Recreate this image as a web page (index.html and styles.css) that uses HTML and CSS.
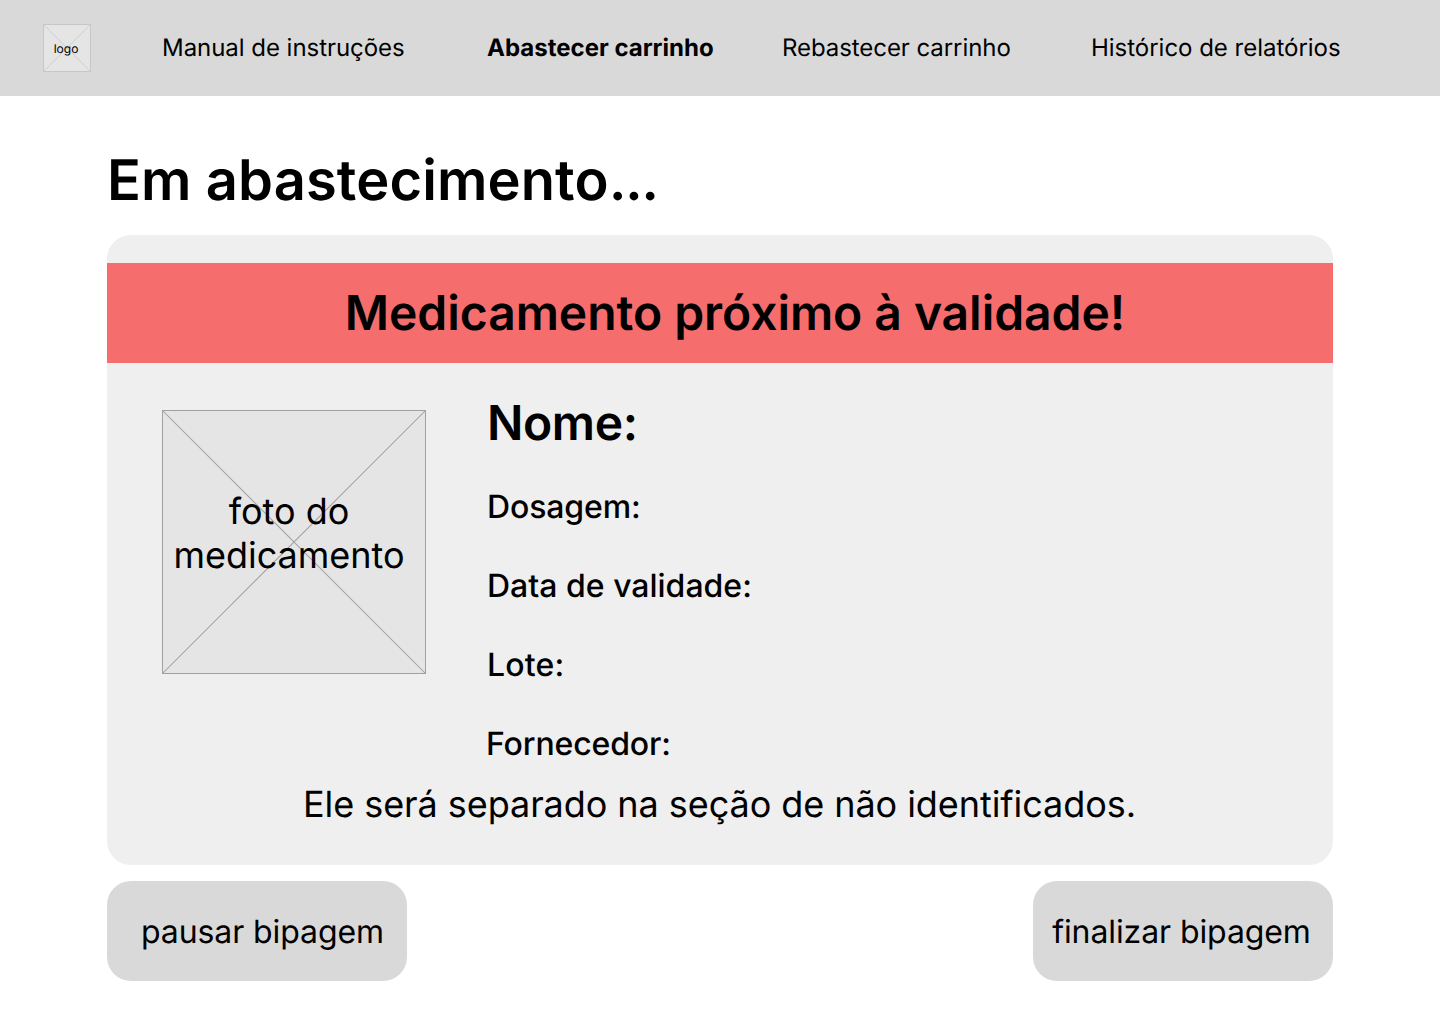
FILE: index.html
```html
<!DOCTYPE html>
<html lang="pt-BR">
<head>
<meta charset="utf-8">
<title>Abastecer carrinho</title>
<link rel="stylesheet" href="styles.css">
</head>
<body>
<header class="topbar">
  <div class="logo">
    <svg class="cross" viewBox="0 0 48 48"><path d="M0 0L48 48M48 0L0 48"/><rect x=".5" y=".5" width="47" height="47"/></svg>
    <span class="logo-text">logo</span>
  </div>
  <nav class="nav">
    <a class="manual">Manual de instruções</a>
    <a class="active">Abastecer carrinho</a>
    <a class="restock">Rebastecer carrinho</a>
    <a class="history">Histórico de relatórios</a>
  </nav>
</header>
<main class="page">
  <h1>Em abastecimento<span class="dots">...</span></h1>
  <section class="card">
    <h2 class="alert">Medicamento próximo à validade!</h2>
    <div class="details">
      <div class="photo">
        <svg class="cross" viewBox="0 0 264 264"><path d="M.5 .5L263.5 263.5M263.5 .5L.5 263.5"/><rect x=".5" y=".5" width="263" height="263"/></svg>
        <p class="photo-text">foto do<br>medicamento</p>
      </div>
      <div class="fields">
        <h2 class="name">Nome:</h2>
        <p class="dosage">Dosagem:</p>
        <p>Data de validade:</p>
        <p class="batch">Lote:</p>
        <p class="supplier">Fornecedor:</p>
      </div>
    </div>
    <p class="note">Ele será separado na seção de não identificados.</p>
  </section>
  <div class="actions">
    <button class="pause">pausar bipagem</button>
    <button class="finish">finalizar bipagem</button>
  </div>
</main>
</body>
</html>
```
FILE: styles.css
```css
* { box-sizing: border-box; margin: 0; padding: 0; }
body { font-family: Inter, sans-serif; color: #000; background: #fff; text-rendering: geometricPrecision; }
.topbar { display: flex; align-items: center; height: 96px; padding-left: 43px; background: #d9d9d9; }
.logo { position: relative; display: flex; align-items: center; justify-content: center; width: 48px; height: 48px; background: #e5e5e5; }
.cross { position: absolute; inset: 0; width: 100%; height: 100%; fill: none; stroke: #a0a0a0; stroke-width: 1; }
.photo .cross path { stroke-width: 1.05; }
.logo .cross { stroke: #c6c6c6; }
.logo .cross path { stroke-width: .7; }
.logo-text { position: relative; font-size: 12px; line-height: 15px; padding-right: 2px; }
.nav { display: flex; margin-left: 71px; padding-bottom: 2px; font-size: 24px; line-height: 29px; white-space: nowrap; }
.manual { width: 325px; letter-spacing: -.04px; }
.active { width: 295px; font-weight: 700; }
.restock { width: 309px; letter-spacing: -.07px; }
.history { letter-spacing: -.02px; }
.page { width: 1226px; margin: 0 auto; padding-top: 49px; }
h1 { font-size: 56px; line-height: 70px; font-weight: 600; letter-spacing: .12px; }
.dots { letter-spacing: -1.6px; }
.card { height: 630px; margin-top: 20px; padding-top: 28px; border-radius: 24px; background: #efefef; }
.alert { height: 100px; padding-left: 30px; background: #f56d6d; font-size: 48px; line-height: 100px; font-weight: 600; letter-spacing: -.05px; text-align: center; }
.details { display: flex; padding: 31px 55px 0; }
.photo { position: relative; width: 264px; height: 264px; margin-top: 16px; padding-top: 79px; background: #e5e5e5; }
.photo-text { position: relative; padding-right: 10px; font-size: 36px; line-height: 44px; text-align: center; }
.fields { margin-left: 61px; font-size: 32px; line-height: 39px; font-weight: 500; }
.fields p { margin-bottom: 40px; }
.fields .name { margin-bottom: 35px; font-size: 48px; line-height: 58px; font-weight: 600; letter-spacing: -.4px; }
.dosage { letter-spacing: -.13px; }
.batch { letter-spacing: .15px; }
.fields .supplier { margin: 0 0 0 -1px; letter-spacing: -.13px; }
.note { margin-top: 19px; padding-right: 1px; font-size: 36px; line-height: 44px; letter-spacing: -.06px; text-align: center; }
.actions { display: flex; justify-content: space-between; margin-top: 16px; }
button { width: 300px; height: 100px; border: 0; border-radius: 24px; background: #d9d9d9; color: #000; font: 400 32px/39px Inter, sans-serif; letter-spacing: -.09px; text-rendering: inherit; white-space: nowrap; }
.pause { padding-left: 11px; }
.finish { padding-right: 3px; }
```
